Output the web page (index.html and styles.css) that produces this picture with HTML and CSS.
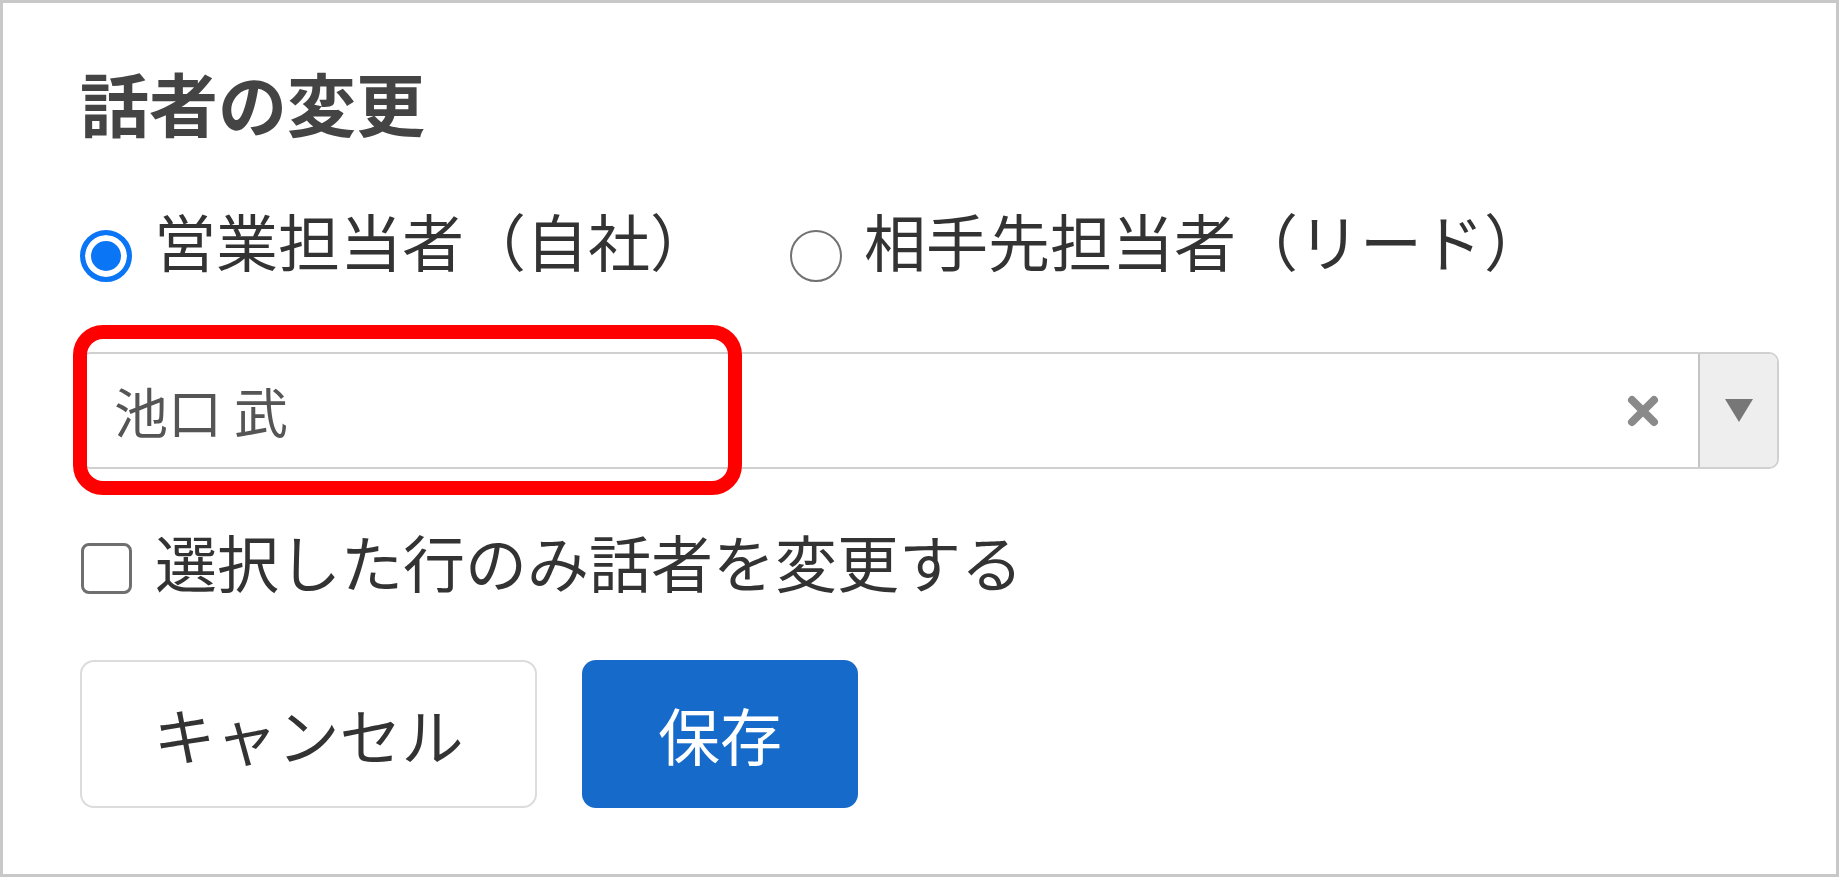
FILE: index.html
```html
<!DOCTYPE html>
<html lang="ja">
<head>
  <meta charset="UTF-8">
  <meta name="viewport" content="width=device-width, initial-scale=1.0">
  <title>話者の変更</title>
  <link rel="stylesheet" href="styles.css">
</head>
<body>
<div class="dialog">
  <h1>話者の変更</h1>

  <div class="speaker-type">
    <label class="option">
      <input type="radio" name="speaker" checked>
      <span>営業担当者（自社）</span>
    </label>
    <label class="option">
      <input type="radio" name="speaker">
      <span>相手先担当者（リード）</span>
    </label>
  </div>

  <div class="select">
    <div class="select-value">池口 武</div>
    <button class="select-clear" type="button" aria-label="クリア">
      <svg viewBox="0 0 34 34" width="34" height="34">
        <path d="M6 6 L28 28 M28 6 L6 28" stroke="#8a8a8a" stroke-width="8" stroke-linecap="round"/>
      </svg>
    </button>
    <div class="select-arrow">
      <svg viewBox="0 0 28 23" width="28" height="23">
        <polygon points="0,0 28,0 14,23" fill="#777"/>
      </svg>
    </div>
    <div class="highlight"></div>
  </div>

  <label class="only-selected">
    <input type="checkbox">
    <span>選択した行のみ話者を変更する</span>
  </label>

  <div class="actions">
    <button class="btn btn-cancel" type="button">キャンセル</button>
    <button class="btn btn-save" type="button">保存</button>
  </div>
</div>
</body>
</html>
```

FILE: styles.css
```css
html, body {
  margin: 0;
  background-color: #fff;
}
body {
  font-family: "Noto Sans CJK JP", "Noto Sans", sans-serif;
  color: #333;
}
.dialog {
  box-sizing: border-box;
  height: 100vh;
  border: 3px solid #c8c8c8;
  padding: 65px 57px 0 77px;
}
h1 {
  margin: 0;
  font-size: 69px;
  line-height: 69px;
  font-weight: 700;
  color: #444;
}
.speaker-type {
  display: flex;
  margin-top: 72px;
}
.option {
  display: flex;
  align-items: flex-start;
  gap: 22px;
  font-size: 62px;
  line-height: 62px;
  margin-right: 78px;
}
.option input {
  appearance: none;
  box-sizing: border-box;
  width: 52px;
  height: 52px;
  margin: 21px 0 0 0;
  border: 2.5px solid #727272;
  border-radius: 50%;
  background-color: #fff;
}
.option input:checked {
  border: 5px solid #0b76f5;
  background-color: #0b76f5;
  box-shadow: inset 0 0 0 6px #fff;
}
.select {
  position: relative;
  display: flex;
  align-items: stretch;
  box-sizing: border-box;
  height: 117px;
  margin-top: 70px;
  border: 2px solid #d0d0d0;
  border-radius: 10px;
}
.select-value {
  flex: 1;
  display: flex;
  align-items: center;
  padding-left: 32px;
  font-size: 54px;
  color: #555;
}
.select-clear {
  display: flex;
  align-items: center;
  padding: 0;
  margin-right: 38px;
  border: none;
  background: none;
}
.select-arrow {
  display: flex;
  align-items: center;
  justify-content: center;
  width: 77px;
  border-left: 2px solid #c4c4c4;
  background-color: #eee;
  border-radius: 0 8px 8px 0;
}
.highlight {
  position: absolute;
  left: -9px;
  top: -29px;
  box-sizing: border-box;
  width: 669px;
  height: 170px;
  border: 14px solid #ff0000;
  border-radius: 30px;
}
.only-selected {
  display: flex;
  align-items: flex-start;
  gap: 23px;
  margin-top: 61px;
  font-size: 62px;
  line-height: 62px;
}
.only-selected input {
  appearance: none;
  box-sizing: border-box;
  width: 51px;
  height: 51px;
  margin: 13px 0 0 1px;
  border: 3px solid #6f6f6f;
  border-radius: 8px;
  background-color: #fff;
}
.actions {
  display: flex;
  gap: 45px;
  margin-top: 66px;
}
.btn {
  box-sizing: border-box;
  height: 148px;
  border-radius: 14px;
  font-family: inherit;
  font-size: 62px;
  line-height: 1;
  padding: 0;
}
.btn-cancel {
  width: 457px;
  border: 2px solid #dcdcdc;
  background-color: #fff;
  color: #333;
}
.btn-save {
  width: 276px;
  border: none;
  background-color: #166bca;
  color: #fff;
}
```
